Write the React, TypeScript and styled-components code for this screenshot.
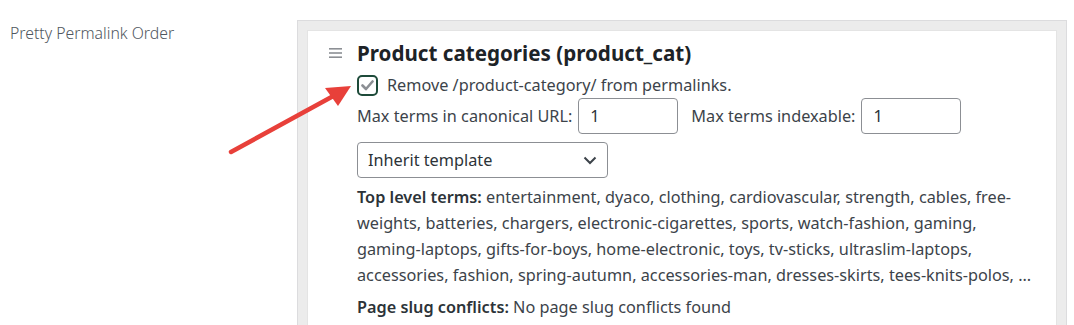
import styled, { createGlobalStyle } from "styled-components";

const GlobalStyle = createGlobalStyle`
    body {
        margin: 0;
        background: #fff;
        font-family: "Noto Sans", "Open Sans", sans-serif;
        color: #3c434a;
    }
`;

const Row = styled.div`
    position: relative;
    display: flex;
    align-items: flex-start;
    padding-top: 20px;
    height: 305px;
    overflow: hidden;
`;

const Th = styled.div`
    width: 287px;
    padding: 2px 0 0 10px;
    font-size: 15.8px;
    color: #50575e;
    font-weight: 300;
`;

const Outer = styled.div`
    width: 750px;
    background: #ececec;
    border: 1px solid #dcdcde;
    padding: 9px 9px 0 9px;
    min-height: 320px;
`;

const Card = styled.div`
    background: #fff;
    border: 1px solid #e4e4e4;
    padding: 8px 16px 12px 21px;
    min-height: 320px;
`;

const Header = styled.div`
    display: flex;
    align-items: center;
    gap: 15px;
`;

const Title = styled.h2`
    margin: 0;
    font-size: 20.6px;
    font-weight: 700;
    color: #1d2327;
`;

const Body = styled.div`
    padding-left: 28px;
    font-size: 16.25px;
`;

const CheckRow = styled.label`
    display: flex;
    align-items: center;
    gap: 9px;
    margin-top: 6px;
    height: 24px;
`;

const Box = styled.span`
    width: 21px;
    height: 21px;
    box-sizing: border-box;
    border: 2px solid #1e4b3a;
    border-radius: 5px;
    display: flex;
    align-items: center;
    justify-content: center;
`;

const Fields = styled.div`
    display: flex;
    align-items: center;
    margin-top: 1px;
`;

const FieldLabel = styled.span<{ $gap?: number }>`
    margin-left: ${p => p.$gap ?? 0}px;
    margin-right: 6px;
`;

const NumberBox = styled.div`
    width: 100px;
    height: 36px;
    box-sizing: border-box;
    border: 1px solid #8c8f94;
    border-radius: 4px;
    padding: 0 11px;
    display: flex;
    align-items: center;
    color: #2c3338;
`;

const Select = styled.div`
    width: 251px;
    height: 36px;
    box-sizing: border-box;
    margin-top: 8px;
    border: 1px solid #8c8f94;
    border-radius: 4px;
    padding: 0 10px;
    display: flex;
    align-items: center;
    justify-content: space-between;
    color: #2c3338;
`;

const Para = styled.p`
    margin: 6px 0 0;
    line-height: 26px;
    width: 678px;
    b {
        font-weight: 600;
        color: #2c3338;
    }
`;

const Arrow = styled.svg`
    position: absolute;
    left: 225px;
    top: 78px;
`;

const Hamburger = () => (
    <svg width="13" height="10" viewBox="0 0 13 10">
        <rect x="0" y="0" width="13" height="1.6" fill="#8c8f94" />
        <rect x="0" y="4.2" width="13" height="1.6" fill="#8c8f94" />
        <rect x="0" y="8.4" width="13" height="1.6" fill="#8c8f94" />
    </svg>
);

const App = () => {
    return (
        <>
            <GlobalStyle />
            <Row>
                <Th>Pretty Permalink Order</Th>
                <Outer>
                    <Card>
                        <Header>
                            <Hamburger />
                            <Title>Product categories (product_cat)</Title>
                        </Header>
                        <Body>
                            <CheckRow>
                                <Box>
                                    <svg width="13" height="11" viewBox="0 0 13 11">
                                        <path d="M1.5 5.5 L5 9 L11.5 1.5" stroke="#8c8f94" strokeWidth="2.6" fill="none" strokeLinecap="round" strokeLinejoin="round" />
                                    </svg>
                                </Box>
                                Remove /product-category/ from permalinks.
                            </CheckRow>
                            <Fields>
                                <FieldLabel>Max terms in canonical URL:</FieldLabel>
                                <NumberBox>1</NumberBox>
                                <FieldLabel $gap={13}>Max terms indexable:</FieldLabel>
                                <NumberBox>1</NumberBox>
                            </Fields>
                            <Select>
                                Inherit template
                                <svg width="14" height="9" viewBox="0 0 14 9">
                                    <path d="M1.5 1.5 L7 7 L12.5 1.5" stroke="#3c434a" strokeWidth="2" fill="none" />
                                </svg>
                            </Select>
                            <Para>
                                <b>Top level terms:</b> entertainment, dyaco, clothing, cardiovascular, strength, cables, free-weights, batteries, chargers, electronic-cigarettes, sports, watch-fashion, gaming, gaming-laptops, gifts-for-boys, home-electronic, toys, tv-sticks, ultraslim-laptops, accessories, fashion, spring-autumn, accessories-man, dresses-skirts, tees-knits-polos, ...
                            </Para>
                            <Para>
                                <b>Page slug conflicts:</b> No page slug conflicts found
                            </Para>
                        </Body>
                    </Card>
                </Outer>
                <Arrow width="130" height="80" viewBox="0 0 130 80">
                    <line x1="6" y1="74" x2="112" y2="16" stroke="#e8403a" strokeWidth="4.5" strokeLinecap="round" />
                    <path d="M126 8 L100 10 L113 28 Z" fill="#e8403a" />
                </Arrow>
            </Row>
        </>
    );
};

export default App;
